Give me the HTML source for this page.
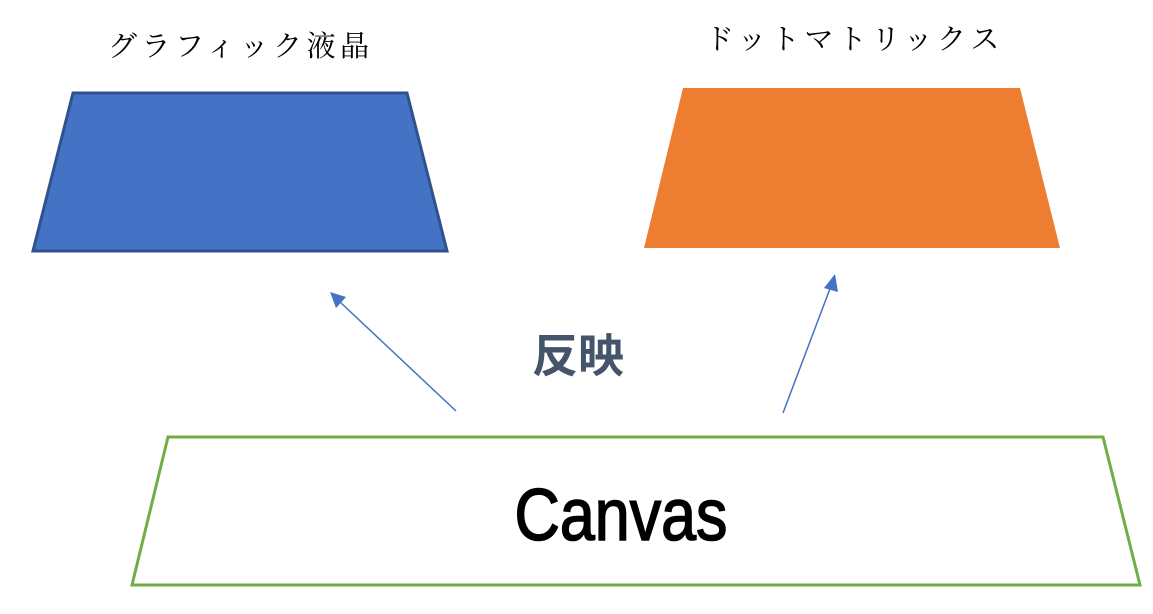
<!DOCTYPE html><html><head><meta charset="utf-8"><style>
body{margin:0;width:1153px;height:614px;background:#fff;overflow:hidden;position:relative}
.t{position:absolute;font-family:"Liberation Serif","Noto Serif CJK SC",serif;font-size:29px;color:#000;white-space:nowrap;line-height:1}
</style></head><body>
<svg width="1153" height="614" style="position:absolute;left:0;top:0">
<polygon points="73,93 407,93 447,251 33,251" fill="#4472c4" stroke="#2f528f" stroke-width="3"/>
<polygon points="683,88 1020,88 1060,248 644,248" fill="#ed7d31"/>
<polygon points="168,437 1103,437 1140,585 132,585" fill="#fff" stroke="#70ad47" stroke-width="3"/>
<line x1="456" y1="411" x2="340" y2="302" stroke="#4472c4" stroke-width="1.5"/>
<polygon points="330,292 346,297 336,308" fill="#4472c4"/>
<line x1="783" y1="413" x2="831" y2="286" stroke="#4472c4" stroke-width="1.5"/>
<polygon points="835,274 838,292 824,288" fill="#4472c4"/>
<text x="532" y="372" font-family="Noto Sans CJK JP,sans-serif" font-weight="bold" font-size="46" fill="#44546a">反映</text>
<text x="621" y="540" text-anchor="middle" font-family="Liberation Sans,sans-serif" font-size="73" fill="#000" stroke="#000" stroke-width="1.6" transform="translate(621,0) scale(0.86,1) translate(-621,0)">Canvas</text>
</svg>
<div class="t" style="left:108px;top:33px;letter-spacing:4.5px">グラフィック液晶</div>
<div class="t" style="left:705px;top:26px;letter-spacing:4.5px">ドットマトリックス</div>
</body></html>
